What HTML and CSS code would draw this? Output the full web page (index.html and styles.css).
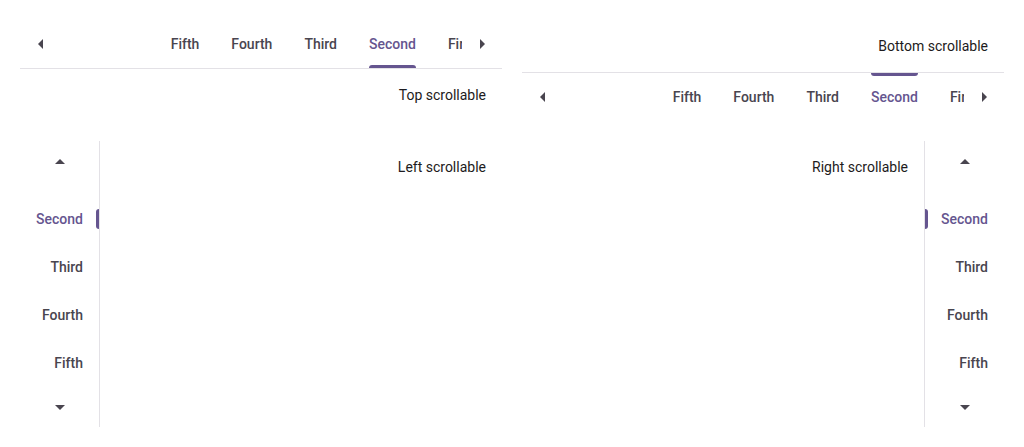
FILE: index.html
```html
<!DOCTYPE html>
<html lang="en">
<head>
<meta charset="utf-8">
<title>Scrollable tabs</title>
<link rel="stylesheet" href="styles.css">
</head>
<body>
<div class="grid">
  <section class="panel panel-top">
    <div class="hbar hbar-top">
      <button class="arrow"><svg width="5" height="10" viewBox="0 0 5 10"><path d="M5 0L0 5L5 10Z"/></svg></button>
      <div class="hview">
        <div class="hlist">
          <div class="htab">Fifth</div>
          <div class="htab">Fourth</div>
          <div class="htab">Third</div>
          <div class="htab selected">Second<span class="ind ind-top"></span></div>
          <div class="htab">First</div>
        </div>
      </div>
      <button class="arrow"><svg width="5" height="10" viewBox="0 0 5 10"><path d="M0 0L5 5L0 10Z"/></svg></button>
    </div>
    <div class="content">Top scrollable</div>
  </section>

  <section class="panel panel-bottom">
    <div class="content">Bottom scrollable</div>
    <div class="hbar hbar-bottom">
      <button class="arrow"><svg width="5" height="10" viewBox="0 0 5 10"><path d="M5 0L0 5L5 10Z"/></svg></button>
      <div class="hview">
        <div class="hlist">
          <div class="htab">Fifth</div>
          <div class="htab">Fourth</div>
          <div class="htab">Third</div>
          <div class="htab selected">Second<span class="ind ind-bottom"></span></div>
          <div class="htab">First</div>
        </div>
      </div>
      <button class="arrow"><svg width="5" height="10" viewBox="0 0 5 10"><path d="M0 0L5 5L0 10Z"/></svg></button>
    </div>
  </section>

  <section class="panel panel-left">
    <div class="vbar vbar-left">
      <button class="varrow"><svg width="10" height="5" viewBox="0 0 10 5"><path d="M0 5L5 0L10 5Z"/></svg></button>
      <div class="vview">
        <div class="vlist">
          <div class="vtab">First</div>
          <div class="vtab selected">Second<span class="ind ind-left"></span></div>
          <div class="vtab">Third</div>
          <div class="vtab">Fourth</div>
          <div class="vtab">Fifth</div>
        </div>
      </div>
      <button class="varrow"><svg width="10" height="5" viewBox="0 0 10 5"><path d="M0 0L5 5L10 0Z"/></svg></button>
    </div>
    <div class="content grow">Left scrollable</div>
  </section>

  <section class="panel panel-right">
    <div class="content grow">Right scrollable</div>
    <div class="vbar vbar-right">
      <button class="varrow"><svg width="10" height="5" viewBox="0 0 10 5"><path d="M0 5L5 0L10 5Z"/></svg></button>
      <div class="vview">
        <div class="vlist">
          <div class="vtab">First</div>
          <div class="vtab selected">Second<span class="ind ind-right"></span></div>
          <div class="vtab">Third</div>
          <div class="vtab">Fourth</div>
          <div class="vtab">Fifth</div>
        </div>
      </div>
      <button class="varrow"><svg width="10" height="5" viewBox="0 0 10 5"><path d="M0 0L5 5L10 0Z"/></svg></button>
    </div>
  </section>
</div>
</body>
</html>
```

FILE: styles.css
```css
* { box-sizing: border-box; }

html, body {
  margin: 0;
  background: #ffffff;
}

body {
  padding: 20px;
  font-family: Roboto, "Liberation Sans", sans-serif;
  font-size: 14px;
  color: #1d1b20;
}

.grid {
  display: grid;
  grid-template-columns: 1fr 1fr;
  grid-template-rows: 101px 286px;
  column-gap: 20px;
  row-gap: 20px;
}

.panel {
  display: flex;
  min-width: 0;
}

.panel-top,
.panel-bottom {
  flex-direction: column;
}

.content {
  padding: 16px;
  line-height: 20px;
  text-align: right;
  letter-spacing: 0;
}

.grow { flex: 1; }

/* horizontal tab bars */
.hbar {
  display: flex;
  height: 49px;
  color: #49454f;
}

.hbar-top { border-bottom: 1px solid #e3e1e6; }
.hbar-bottom { border-top: 1px solid #e3e1e6; }

.arrow, .varrow {
  border: 0;
  background: none;
  padding: 0;
  margin: 0;
  display: flex;
  align-items: center;
  justify-content: center;
  fill: #49454f;
  flex: none;
}

.arrow { width: 40px; }
.varrow { height: 40px; width: 100%; }

.hview {
  flex: 1;
  overflow: hidden;
  display: flex;
  justify-content: flex-end;
}

.hlist {
  display: flex;
  margin-right: -30px;
}

.htab {
  position: relative;
  padding: 0 16px;
  height: 48px;
  line-height: 48px;
  font-weight: 500;
  letter-spacing: 0;
  white-space: nowrap;
}

.selected { color: #65558f; }

.ind {
  position: absolute;
  background: #65558f;
}

.ind-top {
  left: 16px; right: 16px; bottom: 0;
  height: 3px;
  border-radius: 3px 3px 0 0;
}

.ind-bottom {
  left: 16px; right: 16px; top: 0;
  height: 3px;
  border-radius: 0 0 3px 3px;
}

/* vertical tab bars */
.vbar {
  width: 80px;
  flex: none;
  display: flex;
  flex-direction: column;
  color: #49454f;
}

.vbar-left { border-right: 1px solid #e3e1e6; }
.vbar-right { border-left: 1px solid #e3e1e6; }

.vview {
  flex: 1;
  overflow: hidden;
}

.vlist {
  margin-top: -34px;
}

.vtab {
  position: relative;
  height: 48px;
  line-height: 48px;
  padding-right: 16px;
  text-align: right;
  font-weight: 500;
  letter-spacing: 0;
}

.ind-left {
  right: 0; top: 14px;
  width: 3px; height: 20px;
  border-radius: 3px 0 0 3px;
}

.ind-right {
  left: 0; top: 14px;
  width: 3px; height: 20px;
  border-radius: 0 3px 3px 0;
}
```
